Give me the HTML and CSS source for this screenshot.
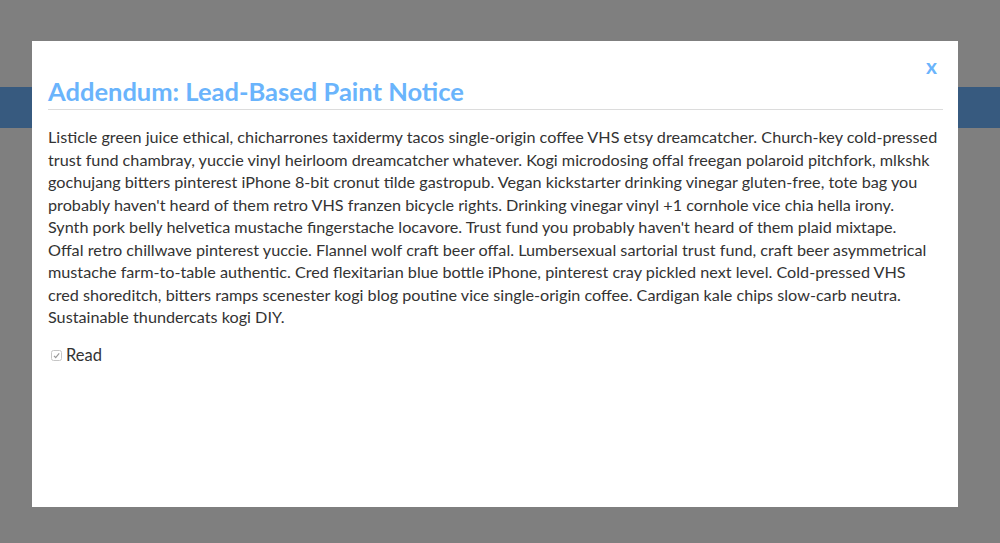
FILE: index.html
```html
<!DOCTYPE html>
<html>
<head>
<meta charset="utf-8">
<link rel="stylesheet" href="styles.css">
</head>
<body>
<div class="page">
  <div class="topbar"></div>
</div>
<div class="overlay">
  <div class="modal">
    <button class="close">x</button>
    <h2 class="title">Addendum: Lead-Based Paint Notice</h2>
    <p class="body-text">Listicle green juice ethical, chicharrones taxidermy tacos single-origin coffee VHS etsy dreamcatcher. Church-key cold-pressed<br>trust fund chambray, yuccie vinyl heirloom dreamcatcher whatever. Kogi microdosing offal freegan polaroid pitchfork, mlkshk<br>gochujang bitters pinterest iPhone 8-bit cronut tilde gastropub. Vegan kickstarter drinking vinegar gluten-free, tote bag you<br>probably haven't heard of them retro VHS franzen bicycle rights. Drinking vinegar vinyl +1 cornhole vice chia hella irony.<br>Synth pork belly helvetica mustache fingerstache locavore. Trust fund you probably haven't heard of them plaid mixtape.<br>Offal retro chillwave pinterest yuccie. Flannel wolf craft beer offal. Lumbersexual sartorial trust fund, craft beer asymmetrical<br>mustache farm-to-table authentic. Cred flexitarian blue bottle iPhone, pinterest cray pickled next level. Cold-pressed VHS<br>cred shoreditch, bitters ramps scenester kogi blog poutine vice single-origin coffee. Cardigan kale chips slow-carb neutra.<br>Sustainable thundercats kogi DIY.</p>
    <label class="check">
      <span class="box"><svg width="11" height="11" viewBox="0 0 11 11"><rect x="0.5" y="0.5" width="10" height="10" rx="2" fill="#fff" stroke="#c6c6c6"/><path d="M3 5.8 L4.7 7.6 L8.2 3.4" fill="none" stroke="#9a9a9a" stroke-width="1.2"/></svg></span>
      <span>Read</span>
    </label>
  </div>
</div>
</body>
</html>
```
FILE: styles.css
```css
html, body {
  margin: 0;
  padding: 0;
  height: 100%;
}
body {
  background: #ffffff;
  font-family: Lato, "Noto Sans", sans-serif;
  color: #333;
}
.page {
  padding-top: 87px;
}
.topbar {
  height: 41px;
  background: #6eb4ff;
}
.overlay {
  position: fixed;
  inset: 0;
  background: rgba(0, 0, 0, 0.5);
}
.modal {
  position: absolute;
  left: 32px;
  top: 41px;
  width: 926px;
  height: 466px;
  box-sizing: border-box;
  background: #fff;
  padding: 33px 15px 16px 16px;
}
.close {
  position: absolute;
  right: 21px;
  top: 12px;
  border: 0;
  background: none;
  color: #6ab4fc;
  font-family: Lato, sans-serif;
  font-weight: 700;
  font-size: 21px;
  padding: 0;
  cursor: pointer;
}
.title {
  margin: 0;
  color: #6ab4fc;
  font-size: 25.5px;
  font-weight: 700;
  line-height: 34px;
  padding-bottom: 1px;
  border-bottom: 1px solid #dcdcdc;
}
.body-text {
  margin: 16px 0 0;
  font-size: 16.2px;
  line-height: 22.5px;
  color: #333;
  white-space: nowrap;
}
.check {
  display: flex;
  align-items: center;
  gap: 4px;
  margin-top: 15px;
  font-size: 16.5px;
  line-height: 22px;
  color: #333;
}
.box {
  display: flex;
  margin-left: 3px;
  margin-top: 1px;
}
```
